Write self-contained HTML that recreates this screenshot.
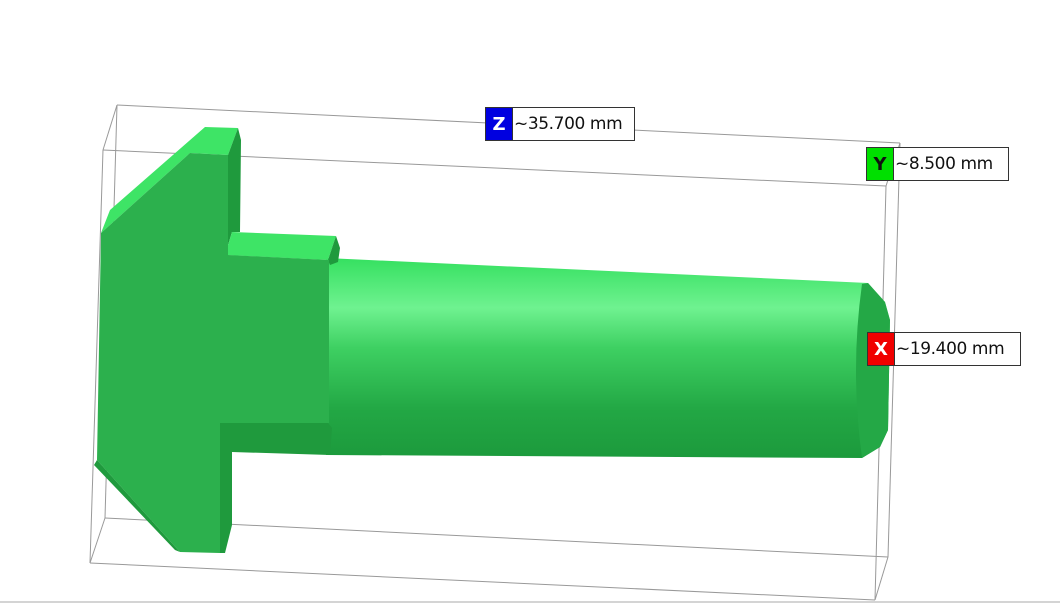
<!DOCTYPE html>
<html><head><style>
body{margin:0;background:#fff;width:1060px;height:603px;overflow:hidden;position:relative;font-family:"DejaVu Sans","Liberation Sans",sans-serif}
.lab{position:absolute;height:34px;border:1px solid #333;background:#fff;display:flex;align-items:center;font-size:17px;color:#111;box-sizing:border-box;white-space:nowrap;overflow:hidden}
.lab b{display:flex;align-items:center;justify-content:center;width:26px;flex:none;height:100%;font-size:18px;border-right:1px solid #333}
.lab span{padding:0 3px 0 1px;letter-spacing:-0.4px}
</style></head><body>
<svg width="1060" height="603" style="position:absolute;left:0;top:0">
<defs>
<linearGradient id="sh" x1="0" y1="0" x2="0" y2="1">
<stop offset="0" stop-color="#35e060"/>
<stop offset="0.25" stop-color="#6ff290"/>
<stop offset="0.45" stop-color="#3ed062"/>
<stop offset="0.75" stop-color="#23a845"/>
<stop offset="1" stop-color="#1c9a3c"/>
</linearGradient>
</defs>
<g stroke="#999" stroke-width="1" fill="none">
<line x1="117" y1="105" x2="900" y2="143"/>
<line x1="103" y1="150" x2="886" y2="186"/>
<line x1="117" y1="105" x2="103" y2="150"/>
<line x1="900" y1="143" x2="886" y2="186"/>
<line x1="117" y1="105" x2="105" y2="518"/>
<line x1="103" y1="150" x2="90" y2="563"/>
<line x1="900" y1="143" x2="888" y2="557"/>
<line x1="886" y1="186" x2="875" y2="600"/>
<line x1="105" y1="518" x2="888" y2="557"/>
<line x1="90" y1="563" x2="875" y2="600"/>
<line x1="105" y1="518" x2="90" y2="563"/>
<line x1="888" y1="557" x2="875" y2="600"/>
</g>
<path d="M326 258 L868 283 L885 302 L890 320 L888 430 L880 447 L862 458 L326 455 Z" fill="url(#sh)"/>
<path d="M862 284 L868 283 L885 302 L890 320 L888 430 L880 447 L862 458 Q850 370 862 284Z" fill="#24a846"/>
<path d="M101 233 L110 210 L205 127 L238 128 L228 155 L190 153 Z" fill="#3ee466"/>
<path d="M228 155 L238 128 L241 140 L240 232 L232 232 L225 255 L228 255 Z" fill="#1f9a3d"/>
<path d="M225 255 L232 232 L336 236 L328 260 Z" fill="#3ee466"/>
<path d="M328 260 L336 236 L340 248 L338 262 L330 265 Z" fill="#1f9a3d"/>
<path d="M220 423 L328 423 L332 428 L330 455 L232 452 L232 525 L225 553 L220 553 Z" fill="#1f9a3d"/>
<path d="M101 233 L190 153 L228 155 L228 255 L329 260 L329 423 L220 423 L220 553 L180 552 L97 460 Z" fill="#2cb04d"/>
<path d="M97 460 L180 552 L175 550 L94 465Z" fill="#1f9a3d"/>
<line x1="0" y1="602" x2="1060" y2="602" stroke="#aaa"/>
</svg>
<div class="lab" style="left:485px;top:107px;width:150px"><b style="background:#0000e0;color:#fff">Z</b><span>~35.700 mm</span></div>
<div class="lab" style="left:866px;top:147px;width:143px"><b style="background:#00e000;color:#111">Y</b><span>~8.500 mm</span></div>
<div class="lab" style="left:867px;top:332px;width:154px"><b style="background:#f00000;color:#fff">X</b><span>~19.400 mm</span></div>
</body></html>
